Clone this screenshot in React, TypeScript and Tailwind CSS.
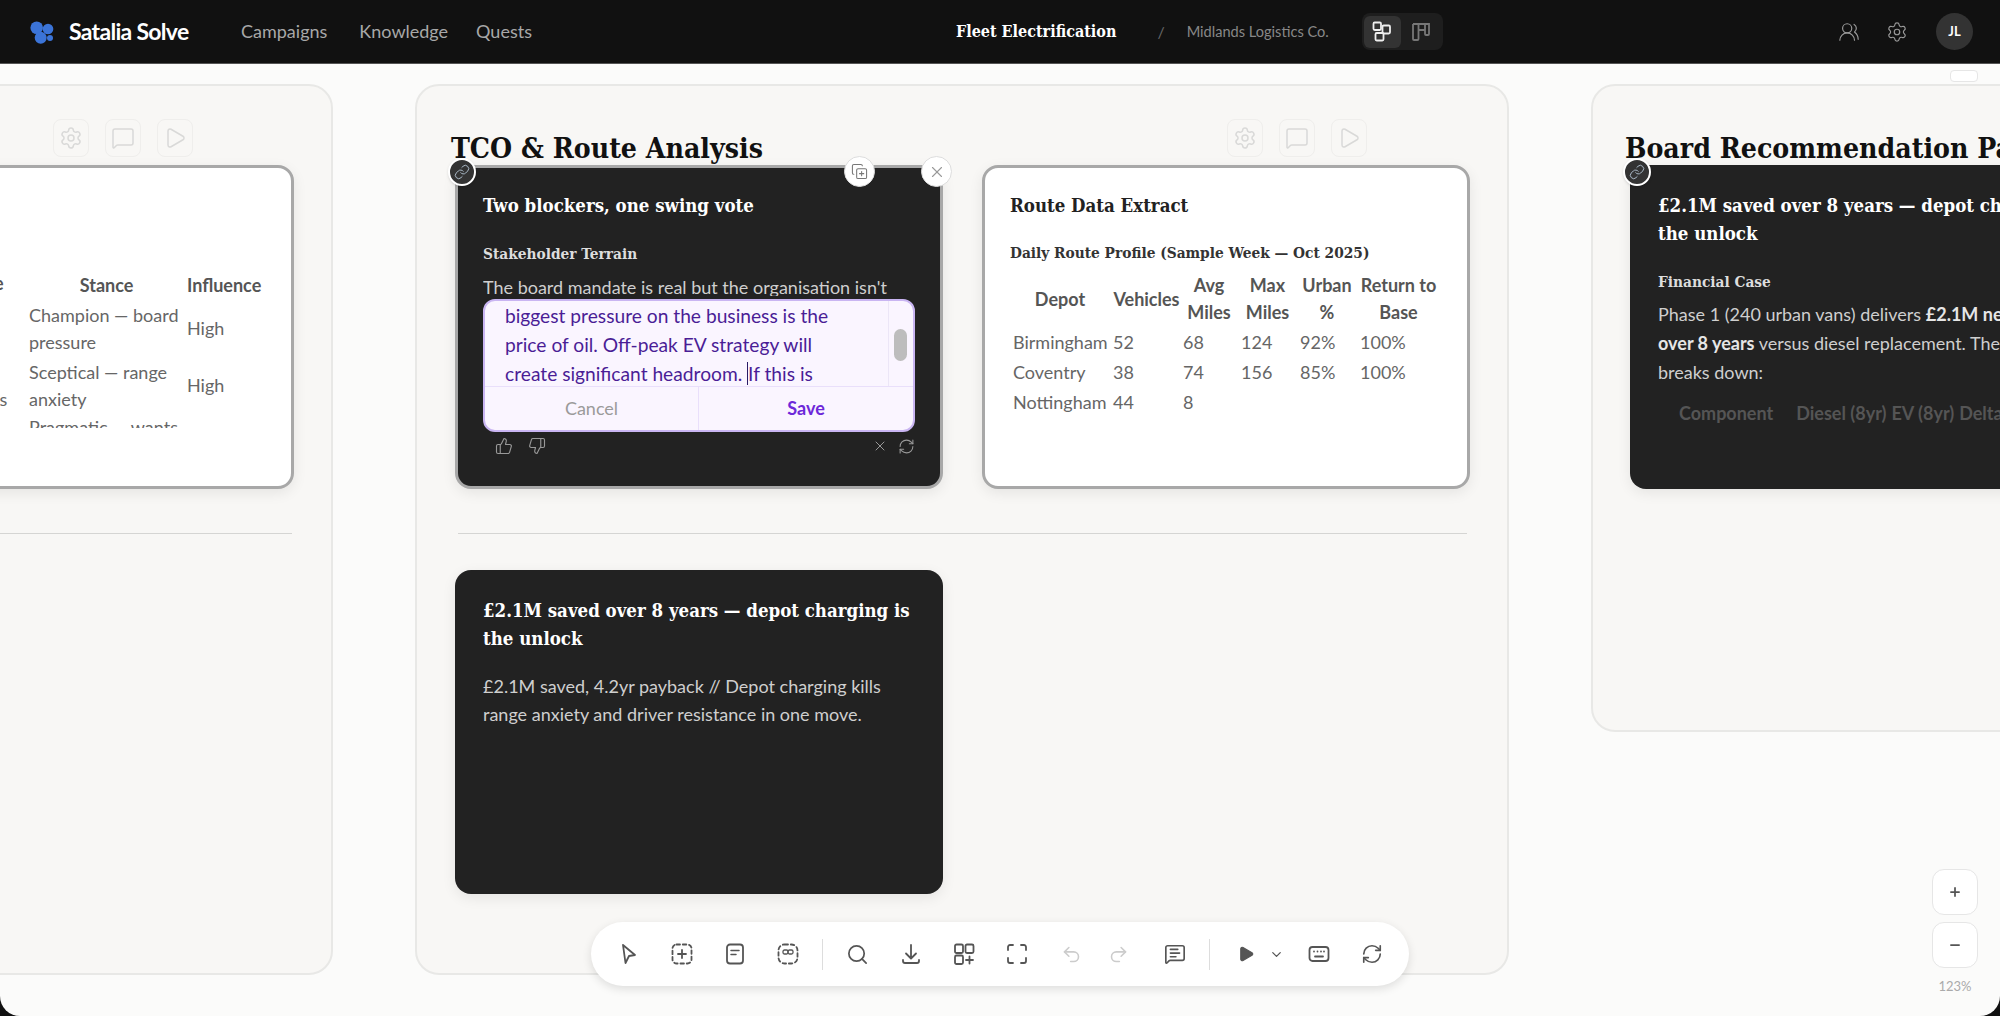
import React from 'react';
import {
  Settings, MessageSquare, Play, ThumbsUp, ThumbsDown, X, RefreshCw, Link as LinkIcon, CopyPlus, UsersRound,
  Search, Undo2, Redo2, MessageSquareText, ChevronDown, Plus, Minus,
} from 'lucide-react';

const sans = "font-['Lato','Noto_Sans',sans-serif]";
const slab = "font-['DejaVu_Serif_Condensed','DejaVu_Serif',serif]";

const Logo = () => (
  <svg width="25" height="24" viewBox="0 0 25 24" fill="#3b74d8">
    <circle cx="7.7" cy="7.7" r="6.3" />
    <circle cx="19" cy="9" r="5.3" />
    <circle cx="11.7" cy="17.7" r="6" />
    <circle cx="21" cy="18" r="3" />
  </svg>
);

const PanelActions = () => (
  <div className="flex gap-4 mb-2">
    {[Settings, MessageSquare, Play].map((Icon, i) => (
      <div key={i} className="w-9 h-[38px] rounded-lg border border-[#efeeec] flex items-center justify-center">
        <Icon className="w-[24px] h-[24px] text-[#d9d9d8]" strokeWidth={1.5} />
      </div>
    ))}
  </div>
);

const LinkBadge: React.FC<{ className: string }> = ({ className }) => (
  <div className={`absolute ${className} w-[28px] h-[28px] rounded-full bg-[#333] border-2 border-white flex items-center justify-center shadow`}>
    <LinkIcon className="w-[16px] h-[16px] text-[#a9b8c6]" strokeWidth={1.5} />
  </div>
);

const Card: React.FC<{ dark?: boolean; selected?: boolean; children?: React.ReactNode }> = ({ dark, selected, children }) => (
  <div
    className={`relative h-[324px] w-[488px] shrink-0 rounded-2xl shadow-[0_4px_14px_rgba(0,0,0,0.08)] ${dark ? 'bg-[#222] text-[#cfcfcf]' : 'bg-white text-[#666]'} ${selected ? 'border-[3px] border-[#a8a8a8]' : ''}`}
  >
    {children}
  </div>
);

const Tool: React.FC<{ children: React.ReactNode; className?: string }> = ({ children, className }) => (
  <div className={`flex items-center justify-center ${className ?? 'w-[53px]'}`}>{children}</div>
);

const Svg: React.FC<{ children: React.ReactNode }> = ({ children }) => (
  <svg width="24" height="24" viewBox="0 0 24 24" fill="none" stroke="#555" strokeWidth="1.8" strokeLinecap="round" strokeLinejoin="round">
    {children}
  </svg>
);

const Toolbar = () => (
  <div className="absolute left-[591px] top-[858px] w-[818px] h-[64px] bg-white rounded-full shadow-[0_3px_10px_rgba(0,0,0,0.12)] flex items-center pl-[11px] text-[#555]">
    <Tool><Svg><path d="M6 3 L18 13 L12 14 L8.5 21 Z" /></Svg></Tool>
    <Tool><Svg><rect x="2.5" y="2.5" width="19" height="19" rx="4" strokeDasharray="3.5 2.8" /><path d="M12 8v8M8 12h8" /></Svg></Tool>
    <Tool><Svg><rect x="4" y="2.5" width="16" height="19" rx="3" /><path d="M8 8.5h8M8 12.5h5" strokeWidth="1.5" /></Svg></Tool>
    <Tool><Svg><rect x="2.5" y="2.5" width="19" height="19" rx="6" strokeDasharray="3.5 2.8" /><rect x="7" y="8" width="5" height="4" rx="1.5" strokeWidth="1.3" /><rect x="12" y="8" width="5" height="4" rx="1.5" strokeWidth="1.3" /></Svg></Tool>
    <div className="w-px h-[31px] bg-[#ddd] mx-[8px]" />
    <Tool><Search className="w-[23px] h-[23px]" strokeWidth={1.8} /></Tool>
    <Tool><Svg><path d="M12 3v13M7 11.5l5 5 5-5M4 18v1a2 2 0 0 0 2 2h12a2 2 0 0 0 2-2v-1" /></Svg></Tool>
    <Tool><Svg><rect x="3" y="2.5" width="8" height="8.5" rx="1.5" /><rect x="13.5" y="2.5" width="8" height="8.5" rx="1.5" /><rect x="3" y="13.5" width="8" height="8.5" rx="1.5" /><path d="M17.5 14.5v7M14 18h7" /></Svg></Tool>
    <Tool><Svg><path d="M8 3H5a2 2 0 0 0-2 2v3M21 8V5a2 2 0 0 0-2-2h-3M3 16v3a2 2 0 0 0 2 2h3M16 21h3a2 2 0 0 0 2-2v-3" /></Svg></Tool>
    <Tool className="w-[48px] ml-[4px]"><Undo2 className="w-[21px] h-[21px] text-[#ccc]" strokeWidth={1.8} /></Tool>
    <Tool className="w-[46px]"><Redo2 className="w-[21px] h-[21px] text-[#ccc]" strokeWidth={1.8} /></Tool>
    <Tool className="w-[53px] ml-[7px]"><MessageSquareText className="w-[22px] h-[22px]" strokeWidth={1.8} /></Tool>
    <div className="w-px h-[31px] bg-[#ddd] ml-[8px]" />
    <Tool className="w-[38px] ml-[17px]"><Play className="w-[18px] h-[18px] fill-[#555]" strokeWidth={1.5} /></Tool>
    <Tool className="w-[22px]"><ChevronDown className="w-[15px] h-[15px]" strokeWidth={2} /></Tool>
    <Tool className="w-[53px] ml-[5px]"><Svg><rect x="2.5" y="5" width="19" height="14" rx="3" /><path d="M7 9.5h.01M10.5 9.5h.01M14 9.5h.01M17 9.5h.01M8 14.5h8" /></Svg></Tool>
    <Tool><RefreshCw className="w-[22px] h-[22px]" strokeWidth={1.8} /></Tool>
  </div>
);

const App: React.FC = () => {
  return (
    <div className={`h-[1016px] w-[2000px] overflow-hidden bg-[#111] relative ${sans}`}>
      {/* top bar */}
      <header className="h-[64px] bg-[#111] border-b border-[#555] flex items-center text-[#a8a8a8]">
        <div className="ml-[29px] flex items-center gap-[15px] w-[212px]">
          <Logo />
          <span className="text-white text-[23px] font-bold tracking-[-0.7px] whitespace-nowrap">Satalia Solve</span>
        </div>
        <nav className="flex text-[18px]">
          <span>Campaigns</span>
          <span className="ml-[32px]">Knowledge</span>
          <span className="ml-[28px]">Quests</span>
        </nav>
        <span className={`ml-[424px] text-white text-[16px] font-bold whitespace-nowrap ${slab}`}>Fleet Electrification</span>
        <span className="ml-[41px] text-[#666] text-[16px]">/</span>
        <span className="ml-[22px] text-[14.6px] text-[#888] whitespace-nowrap">Midlands Logistics Co.</span>
        <div className="ml-[33px] flex items-center w-[81px] h-[37px] bg-[#1e1e1e] rounded-lg px-[2px]">
          <div className="w-[37px] h-[32px] bg-[#333] rounded-md flex items-center justify-center">
            <svg width="20" height="21" viewBox="0 0 20 21" fill="none" stroke="#eee" strokeWidth="1.8">
              <rect x="1.5" y="1.5" width="7.5" height="7.5" rx="1.2" />
              <rect x="10.5" y="4.5" width="7.5" height="8" rx="1.2" />
              <rect x="3.5" y="12" width="8" height="7.5" rx="1.2" />
            </svg>
          </div>
          <div className="w-[40px] flex items-center justify-center">
            <svg width="20" height="20" viewBox="0 0 20 20" fill="none" stroke="#777" strokeWidth="1.8">
              <path d="M2 2h16v10a1 1 0 0 1-1 1h-2a1 1 0 0 1-1-1V2M7.5 2v15a1 1 0 0 1-1 1H3a1 1 0 0 1-1-1V2M7.5 8h6.5" />
            </svg>
          </div>
        </div>
        <div className="ml-auto mr-[27px] flex items-center">
          <UsersRound className="w-[22px] h-[22px]" strokeWidth={1.3} color="#999" />
          <Settings className="w-[22px] h-[22px] ml-[26px]" strokeWidth={1.3} color="#999" />
          <div className="w-[37px] h-[37px] ml-[28px] rounded-full bg-[#333] text-white text-[13px] font-bold flex items-center justify-center">JL</div>
        </div>
      </header>

      {/* canvas */}
      <main className="relative h-[952px] bg-[#fbfbfa] rounded-b-[20px] overflow-hidden">
        <div className="absolute right-[22px] top-[6px] w-[28px] h-[12px] bg-white border border-[#e6e6e6] rounded" />
        <div className="flex items-start gap-[82px] pt-[20px] -ml-[760px]">
          {/* left panel */}
          <section className="shrink-0 w-[1093px] h-[891px] bg-[#f8f7f5] border-2 border-[#e8e8e6] rounded-3xl pl-[37px]">
            <div className="h-[79px] flex items-end justify-end pr-[138px]">
              <PanelActions />
            </div>
            <div className="flex gap-[39px]">
              <div className="w-[488px]" />
              <Card selected>
                <div className="h-[158px] overflow-hidden mx-[25px] mt-[102px] pt-0">
                  <table className="table-fixed w-[430px] text-[18px] leading-[27px] [&_td]:align-middle">
                    <thead>
                      <tr className="text-[#555]">
                        <th className="w-[85px] font-bold">Name</th>
                        <th className="w-[106px] font-bold pl-[28px] pb-[3px]">Role</th>
                        <th className="w-[159px] font-bold pl-[4px]">Stance</th>
                        <th className="w-[80px] font-bold text-left pl-[3px]">Influence</th>
                      </tr>
                    </thead>
                    <tbody>
                      <tr><td>Board</td><td>CEO</td><td className="pl-[4px] pt-[2px] pb-[1px]">Champion — board pressure</td><td className="pl-[3px]">High</td></tr>
                      <tr><td>Fleet</td><td>Fleet<br />Operations</td><td className="pl-[4px] pt-[2px] pb-[1px]">Sceptical — range anxiety</td><td className="pl-[3px]">High</td></tr>
                      <tr><td>CFO</td><td>CFO</td><td className="pl-[4px]">Pragmatic — wants</td><td /></tr>
                    </tbody>
                  </table>
                </div>
              </Card>
            </div>
            <div className="w-[1009px] ml-[4px] mt-[44px] border-t border-[#d5d5d3]" />
          </section>

          {/* middle panel */}
          <section className="shrink-0 w-[1094px] h-[891px] bg-[#f8f7f5] border-2 border-[#e8e8e6] rounded-3xl pl-[38px]">
            <div className="h-[79px] flex items-end justify-between pr-[140px]">
              <h2 className={`text-[28.2px] leading-[36px] font-bold text-[#111] -ml-[4px] -mb-[2px] ${slab}`}>TCO &amp; Route Analysis</h2>
              <PanelActions />
            </div>
            <div className="flex gap-[39px]">
              <Card dark selected>
                <LinkBadge className="-left-[10px] -top-[10px]" />
                <div className="absolute left-[386px] -top-[12px] w-[31px] h-[31px] rounded-full bg-white border border-[#ddd] flex items-center justify-center">
                  <CopyPlus className="w-[17px] h-[17px] text-[#777]" strokeWidth={1.5} />
                </div>
                <div className="absolute left-[463px] -top-[12px] w-[31px] h-[31px] rounded-full bg-white border border-[#ddd] flex items-center justify-center">
                  <X className="w-[18px] h-[18px] text-[#999]" strokeWidth={1.5} />
                </div>
                <div className="px-[25px] pt-[24px]">
                  <h3 className={`text-[18.5px] leading-[28px] font-bold text-white ${slab}`}>Two blockers, one swing vote</h3>
                  <h4 className={`mt-[22px] text-[15.3px] leading-[24px] font-bold text-[#ddd] ${slab}`}>Stakeholder Terrain</h4>
                  <div className="h-[30px] overflow-hidden">
                    <p className="mt-[7px] text-[18px] leading-[28px] whitespace-nowrap">The board mandate is real but the organisation isn't</p>
                  </div>
                </div>
                <div className="relative mx-[25px] mt-[3px] h-[133px] bg-[#faf5ff] border-2 border-[#c9b5f2] rounded-xl flex flex-col overflow-hidden">
                  <div className="h-[86px] border-b border-[#e9dffb] flex overflow-hidden">
                    <div className="flex-1 pl-[20px] text-[19.2px] leading-[29px] text-[#4a1d96]">
                      <div className="whitespace-nowrap">biggest pressure on the business is the</div>
                      <div className="whitespace-nowrap">price of oil. Off-peak EV strategy will</div>
                      <div className="whitespace-nowrap">create significant headroom. <span className="border-l border-[#2a1a66]">If this is</span></div>
                    </div>
                    <div className="w-[25px] border-l border-[#ece6f7] pt-[28px] pl-[5px]">
                      <div className="w-[13px] h-[32px] rounded-full bg-[#bdbdbd]" />
                    </div>
                  </div>
                  <div className="flex-1 flex text-[18px]">
                    <div className="w-[214px] border-r border-[#e9dffb] flex items-center justify-center text-[#9a9a9a]">Cancel</div>
                    <div className="flex-1 flex items-center justify-center text-[#6d28d9] font-bold">Save</div>
                  </div>
                </div>
                <div className="flex items-center mx-[25px] mt-[5px] pl-[12px] text-[#999] h-[18px]">
                  <ThumbsUp className="w-[18px] h-[18px]" strokeWidth={1.5} />
                  <ThumbsDown className="w-[18px] h-[18px] ml-[15px]" strokeWidth={1.5} />
                  <X className="w-[16px] h-[16px] ml-auto" strokeWidth={1.5} />
                  <RefreshCw className="w-[17px] h-[17px] ml-[10px]" strokeWidth={1.5} />
                </div>
              </Card>

              <Card selected>
                <div className="px-[25px] pt-[24px]">
                  <h3 className={`text-[18.5px] leading-[28px] font-bold text-[#222] ${slab}`}>Route Data Extract</h3>
                  <h4 className={`mt-[21px] text-[15.3px] leading-[24px] font-bold text-[#333] whitespace-nowrap ${slab}`}>Daily Route Profile (Sample Week — Oct 2025)</h4>
                  <table className="table-fixed w-[430px] mt-[7px] text-[18px] leading-[27px]">
                    <thead>
                      <tr className="text-[#555] [&_th]:pb-[1px]">
                        <th className="w-[100px] font-bold">Depot</th>
                        <th className="w-[70px] font-bold pl-[3px]">Vehicles</th>
                        <th className="w-[58px] font-bold">Avg Miles</th>
                        <th className="w-[59px] font-bold">Max Miles</th>
                        <th className="w-[60px] font-bold">Urban %</th>
                        <th className="w-[83px] font-bold">Return to Base</th>
                      </tr>
                    </thead>
                    <tbody className="[&_td]:h-[30px] [&_td]:pl-[3px]">
                      <tr><td>Birmingham</td><td>52</td><td>68</td><td>124</td><td>92%</td><td>100%</td></tr>
                      <tr><td>Coventry</td><td>38</td><td>74</td><td>156</td><td>85%</td><td>100%</td></tr>
                      <tr><td>Nottingham</td><td>44</td><td>8</td><td /><td /><td /></tr>
                    </tbody>
                  </table>
                </div>
              </Card>
            </div>
            <div className="w-[1009px] ml-[3px] mt-[44px] border-t border-[#d5d5d3]" />
            <div className="mt-[36px]">
              <Card dark>
                <div className="px-[28px] pt-[27px]">
                  <h3 className={`text-[18.5px] leading-[28px] font-bold text-white ${slab}`}>£2.1M saved over 8 years — depot charging is the unlock</h3>
                  <p className="mt-[19px] text-[18px] leading-[28px]">£2.1M saved, 4.2yr payback // Depot charging kills range anxiety and driver resistance in one move.</p>
                </div>
              </Card>
            </div>
          </section>

          {/* right panel */}
          <section className="shrink-0 w-[1093px] h-[648px] bg-[#f8f7f5] border-2 border-[#e8e8e6] rounded-3xl pl-[37px]">
            <div className="h-[79px] flex items-end">
              <h2 className={`text-[28.2px] leading-[36px] font-bold text-[#111] -ml-[5px] -mb-[2px] whitespace-nowrap ${slab}`}>Board Recommendation Pack</h2>
            </div>
            <Card dark>
              <LinkBadge className="-left-[7px] -top-[7px]" />
              <div className="px-[28px] pt-[27px]">
                <h3 className={`text-[18.5px] leading-[28px] font-bold text-white ${slab}`}>£2.1M saved over 8 years — depot charging is the unlock</h3>
                <h4 className={`mt-[22px] text-[15.3px] leading-[24px] font-bold text-[#ddd] ${slab}`}>Financial Case</h4>
                <p className="mt-[6px] text-[18px] leading-[29px] w-[432px]">Phase 1 (240 urban vans) delivers <b className="text-[#e6e6e6]">£2.1M net saving over 8 years</b> versus diesel replacement. The saving breaks down:</p>
                <div className="mt-[13px] flex text-[18px] font-bold text-[#555] whitespace-nowrap pl-[21px] gap-[5px]">
                  <span className="mr-[18px]">Component</span><span>Diesel (8yr)</span><span>EV (8yr)</span><span>Delta</span>
                </div>
              </div>
            </Card>
          </section>
        </div>

        <Toolbar />

        {/* zoom */}
        <div className="absolute left-[1932px] top-[805px] flex flex-col items-center gap-[7px] text-[#555]">
          <div className="w-[46px] h-[46px] bg-white border border-[#e6e6e6] rounded-xl flex items-center justify-center"><Plus className="w-[14px] h-[14px]" strokeWidth={3} /></div>
          <div className="w-[46px] h-[46px] bg-white border border-[#e6e6e6] rounded-xl flex items-center justify-center"><Minus className="w-[14px] h-[14px]" strokeWidth={3} /></div>
          <span className="text-[13px] text-[#aaa] mt-[2px]">123%</span>
        </div>
      </main>
    </div>
  );
};

export default App;
